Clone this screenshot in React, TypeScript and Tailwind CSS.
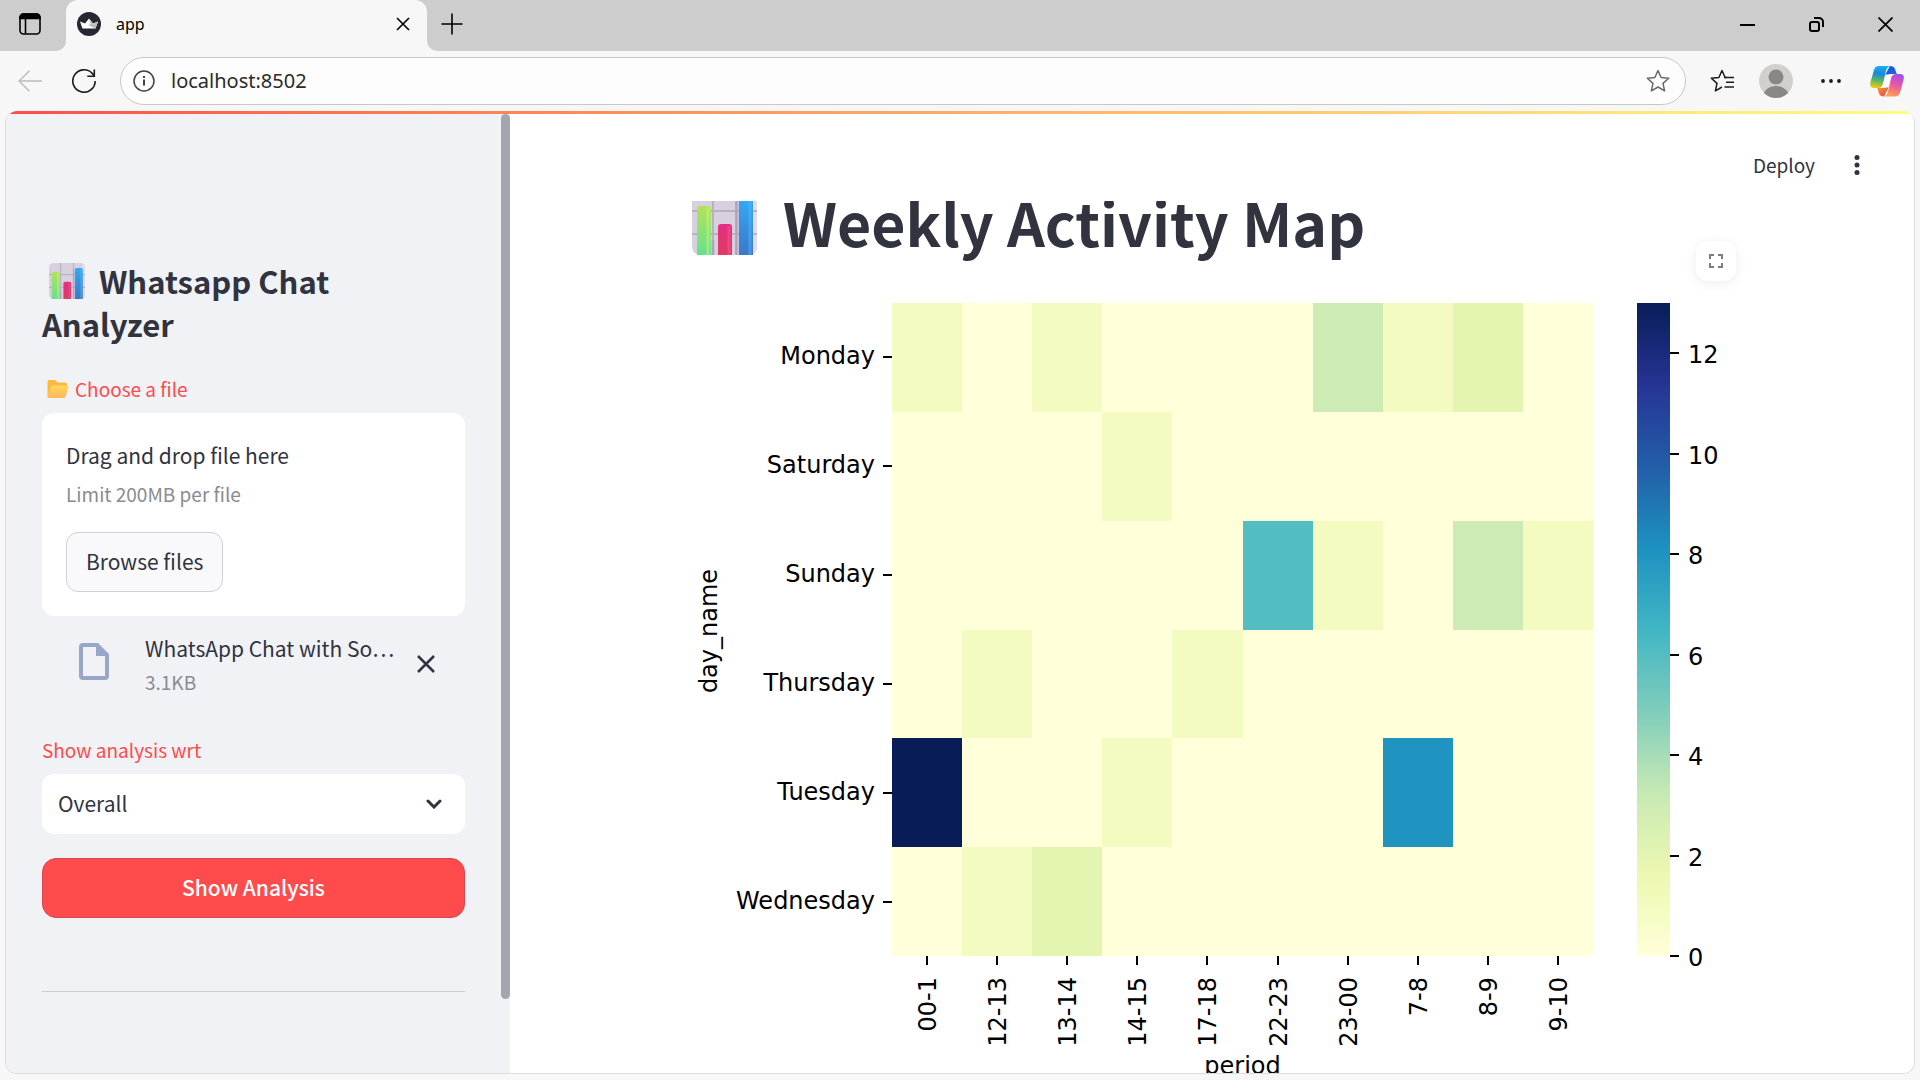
import React, { useState } from "react";

const STOPS = [
  [255, 255, 217],
  [237, 248, 177],
  [199, 233, 180],
  [127, 205, 187],
  [65, 182, 196],
  [29, 145, 192],
  [34, 94, 168],
  [37, 52, 148],
  [8, 29, 88],
];

const MAX = 13;

function colorFor(value: number) {
  const t = (value / MAX) * (STOPS.length - 1);
  const i = Math.min(Math.floor(t), STOPS.length - 2);
  const f = t - i;
  const c = STOPS[i].map((a, k) => Math.round(a + (STOPS[i + 1][k] - a) * f));
  return `rgb(${c.join(",")})`;
}

const PERIODS = ["00-1", "12-13", "13-14", "14-15", "17-18", "22-23", "23-00", "7-8", "8-9", "9-10"];

const DAYS: { name: string; values: number[] }[] = [
  { name: "Monday", values: [1, 0, 1, 0, 0, 0, 3, 1, 2, 0] },
  { name: "Saturday", values: [0, 0, 0, 1, 0, 0, 0, 0, 0, 0] },
  { name: "Sunday", values: [0, 0, 0, 0, 0, 6, 1, 0, 3, 1] },
  { name: "Thursday", values: [0, 1, 0, 0, 1, 0, 0, 0, 0, 0] },
  { name: "Tuesday", values: [13, 0, 0, 1, 0, 0, 0, 8, 0, 0] },
  { name: "Wednesday", values: [0, 1, 2, 0, 0, 0, 0, 0, 0, 0] },
];

function Heatmap() {
  const x0 = 208;
  const y0 = 13;
  const w = 701;
  const h = 653;
  const cw = w / PERIODS.length;
  const ch = h / DAYS.length;
  const bottom = y0 + h;
  return (
    <svg
      viewBox="0 0 1056 810"
      className="block w-full font-['DejaVu_Sans',sans-serif] text-[24px]"
      role="img"
      aria-label="Weekly activity heatmap"
    >
      <defs>
        <linearGradient id="ylgnbu" x1="0" y1="1" x2="0" y2="0">
          {STOPS.map((c, i) => (
            <stop key={i} offset={i / (STOPS.length - 1)} stopColor={`rgb(${c.join(",")})`} />
          ))}
        </linearGradient>
      </defs>
      <rect x={x0} y={y0} width={w} height={h} fill={colorFor(0)} />
      {DAYS.map((d, r) =>
        d.values.map((v, c) =>
          v > 0 ? (
            <rect
              key={`${r}-${c}`}
              x={Math.round(x0 + c * cw)}
              y={Math.round(y0 + r * ch)}
              width={Math.round(x0 + (c + 1) * cw) - Math.round(x0 + c * cw)}
              height={Math.round(y0 + (r + 1) * ch) - Math.round(y0 + r * ch)}
              fill={colorFor(v)}
            />
          ) : null
        )
      )}
      {DAYS.map((d, r) => {
        const y = Math.round(y0 + (r + 0.5) * ch);
        return (
          <g key={d.name}>
            <rect x={x0 - 9} y={y - 1} width={9} height={2} />
            <text x={x0 - 17} y={y + 7} textAnchor="end">
              {d.name}
            </text>
          </g>
        );
      })}
      {PERIODS.map((p, c) => {
        const x = Math.round(x0 + (c + 0.5) * cw);
        return (
          <g key={p}>
            <rect x={x - 1} y={bottom} width={2} height={9} />
            <text transform={`translate(${x + 9} ${bottom + 21}) rotate(-90)`} textAnchor="end">
              {p}
            </text>
          </g>
        );
      })}
      <text transform="translate(33 341) rotate(-90)" textAnchor="middle">
        day_name
      </text>
      <text x={x0 + w / 2} y={784} textAnchor="middle">
        period
      </text>
      <rect x={953} y={y0} width={33} height={h} fill="url(#ylgnbu)" />
      {[0, 2, 4, 6, 8, 10, 12].map((v) => {
        const y = Math.round(bottom - (v / MAX) * h);
        return (
          <g key={v}>
            <rect x={986} y={y - 1} width={9} height={2} />
            <text x={1004} y={y + 10}>
              {v}
            </text>
          </g>
        );
      })}
    </svg>
  );
}

function ChartEmoji({ id, className }: { id: string; className: string }) {
  return (
    <svg viewBox="0 0 65 65" className={className} aria-hidden="true">
      <defs>
        <linearGradient id={`${id}g`} x1="0" y1="0" x2="0" y2="1">
          <stop offset="0" stopColor="#b3e25a" />
          <stop offset="1" stopColor="#66e08f" />
        </linearGradient>
        <linearGradient id={`${id}r`} x1="0" y1="0" x2="0" y2="1">
          <stop offset="0" stopColor="#e62e86" />
          <stop offset="1" stopColor="#df3b62" />
        </linearGradient>
        <linearGradient id={`${id}b`} x1="0" y1="0" x2="0" y2="1">
          <stop offset="0" stopColor="#33aaf7" />
          <stop offset="1" stopColor="#3a78c9" />
        </linearGradient>
        <clipPath id={`${id}c`}>
          <rect width="65" height="65" rx="8" />
        </clipPath>
      </defs>
      <g clipPath={`url(#${id}c)`}>
        <rect width="65" height="65" fill="#d7d1df" />
        <rect x="60" width="5" height="65" fill="#e2dbea" />
        <path d="M0 21h65M0 44h65M21 0v65M44 0v65" stroke="#b9b1c1" strokeWidth="2" />
        <path d="M21 50v15M45 10v55" stroke="#a795bb" strokeWidth="3" opacity=".5" />
      </g>
      <path d="M5 65V19a3 3 0 0 1 3-3h8a3 3 0 0 1 3 3v46z" fill={`url(#${id}g)`} />
      <path d="M16 17v48" stroke="#c9f56e" strokeWidth="3" opacity=".5" />
      <path d="M26 65V37a3 3 0 0 1 3-3h8a3 3 0 0 1 3 3v28z" fill={`url(#${id}r)`} />
      <path d="M37 36v29" stroke="#f65a9a" strokeWidth="3" opacity=".5" />
      <path d="M47 65V12a3 3 0 0 1 3-3h8a3 3 0 0 1 3 3v53z" fill={`url(#${id}b)`} />
      <path d="M58 10v55" stroke="#55bdff" strokeWidth="3" opacity=".45" />
    </svg>
  );
}

function FolderEmoji() {
  return (
    <svg viewBox="0 0 22 20" className="h-5 w-[22px]" aria-hidden="true">
      <defs>
        <linearGradient id="folder" x1="0" y1="0" x2="0" y2="1">
          <stop offset="0" stopColor="#ffd95c" />
          <stop offset="1" stopColor="#ffb65e" />
        </linearGradient>
      </defs>
      <path d="M.5 18V2.500Q.5 1 2 1h5.500q1 0 1.600.8L10.500 3.500H18q2 0 2 2V10L4 18z" fill="#fdb93f" />
      <path d="M5.500 6.500h14.800q1.500 0 1.200 1.400L18.600 17.500q-.5 1.500-2 1.500H1.700q-1.200 0-1-.9L4 7.500q.4-1 1.500-1z" fill="url(#folder)" />
    </svg>
  );
}

function CopilotLogo() {
  return (
    <svg viewBox="0 0 34 31" className="h-[31px] w-[34px]" aria-hidden="true">
      <defs>
        <linearGradient id="cpA" x1="0.500" y1="0" x2="0.350" y2="1">
          <stop offset="0" stopColor="#1cb0f0" />
          <stop offset=".35" stopColor="#1b87dd" />
          <stop offset=".65" stopColor="#55b568" />
          <stop offset="1" stopColor="#f3c90c" />
        </linearGradient>
        <linearGradient id="cpB" x1="0.700" y1="0" x2="0.400" y2="1">
          <stop offset="0" stopColor="#a24df2" />
          <stop offset=".5" stopColor="#f0589c" />
          <stop offset="1" stopColor="#fda352" />
        </linearGradient>
        <linearGradient id="cpC" x1="0" y1="0" x2="1" y2="1">
          <stop offset="0" stopColor="#1a4fd0" />
          <stop offset="1" stopColor="#1f6ae6" />
        </linearGradient>
        <linearGradient id="cpD" x1="0" y1="0" x2="1" y2="1">
          <stop offset="0" stopColor="#fb9a3c" />
          <stop offset="1" stopColor="#e5403b" />
        </linearGradient>
      </defs>
      <path d="M15.500 6.500L12.500 18Q11.500 21 14 22l3.500 1.500L20.500 12Q21.500 8.500 24 8z" fill="#fdfdfd" />
      <path d="M20 0Q24 0 25 3l1.700 5H22q-3 0-6.800.8z" fill="url(#cpC)" />
      <path d="M14 30.500Q10 30.500 9 27.500L7.300 22H12q3 0 6.800-.8z" fill="url(#cpD)" />
      <path d="M9 0h12q-4 0-5.300 6L13 17.500Q12 22 8 22H4Q-1 22 .5 16L4 4Q5 0 9 0z" fill="url(#cpA)" />
      <path d="M25 30.500H13q4 0 5.300-6L21 12.500Q22 8 26 8h4q5 0 3.500 6L30 26.500Q29 30.500 25 30.500z" fill="url(#cpB)" />
    </svg>
  );
}

const STAR = "M12 1.500l3.100 7 7.600.8-5.700 5.100 1.600 7.500-6.600-3.900-6.600 3.900L7 14.400 1.300 9.300l7.600-.8z";

function TabStrip() {
  return (
    <div className="flex h-[51px] shrink-0 bg-[#f7f7f7] font-['Noto_Sans',sans-serif]">
      <div className="flex w-[66px] items-center rounded-br-[10px] bg-[#cdcdcd] pl-[19px] pb-1">
        <button aria-label="Tab actions" className="block">
          <svg viewBox="0 0 22 22" className="h-[22px] w-[22px]" fill="none" stroke="#000" strokeWidth="1.600">
            <rect x="1" y="1" width="20" height="20" rx="3.500" />
            <path d="M1 5.500V4.500A3.500 3.500 0 0 1 4.500 1h13A3.500 3.500 0 0 1 21 4.500V5.500z" fill="#000" />
            <path d="M6.500 6v15" />
          </svg>
        </button>
      </div>
      <div className="w-[361px] bg-[#cdcdcd]">
        <div className="flex h-full items-center rounded-t-xl bg-[#f7f7f7] pr-3 pb-[3px] pl-[11px]">
          <svg viewBox="0 0 24 24" className="h-6 w-6" aria-hidden="true">
            <circle cx="12" cy="12" r="12" fill="#262730" />
            <path d="M3 9.500l5 2L12 6.500l4 5 5-2L18.500 16.500h-13z" fill="#fff" />
            <path d="M12 6.500l4 5-2 1.500zM21 9.500l-2.500 7L11 13l5-1.500z" fill="#bdbdc2" />
          </svg>
          <span className="ml-[15px] flex-1 text-base text-black">app</span>
          <button aria-label="Close tab" className="flex h-6 w-6 items-center justify-center">
            <svg viewBox="0 0 14 14" className="h-3.5 w-3.5" stroke="#000" strokeWidth="1.600">
              <path d="M1 1l12 12M13 1L1 13" />
            </svg>
          </button>
        </div>
      </div>
      <div className="flex flex-1 items-center justify-between rounded-bl-[10px] bg-[#cdcdcd] pr-[27px] pb-[3px] pl-[14px]">
        <button aria-label="New tab">
          <svg viewBox="0 0 22 22" className="h-[22px] w-[22px]" stroke="#000" strokeWidth="1.600">
            <path d="M11 .5v21M.5 11h21" />
          </svg>
        </button>
        <div className="flex items-center gap-[54px]">
          <button aria-label="Minimize">
            <svg viewBox="0 0 15 15" className="h-[15px] w-[15px]" stroke="#000" strokeWidth="2">
              <path d="M0 8h15" />
            </svg>
          </button>
          <button aria-label="Restore">
            <svg viewBox="0 0 15 15" className="h-[15px] w-[15px]" fill="none" stroke="#000" strokeWidth="2">
              <rect x="1" y="5" width="9" height="9" rx="2" />
              <path d="M5 1h5a4 4 0 0 1 4 4v5" />
            </svg>
          </button>
          <button aria-label="Close window">
            <svg viewBox="0 0 15 15" className="h-[15px] w-[15px]" stroke="#000" strokeWidth="1.700">
              <path d="M.5.5l14 14M14.500.5l-14 14" />
            </svg>
          </button>
        </div>
      </div>
    </div>
  );
}

function Toolbar() {
  const [url, setUrl] = useState("localhost:8502");
  return (
    <div className="flex h-[60px] shrink-0 items-center bg-[#f7f7f7] pr-[16px] pl-[18px] font-['Noto_Sans',sans-serif]">
      <button aria-label="Back">
        <svg viewBox="0 0 24 22" className="h-[22px] w-6" fill="none" stroke="#bcbcbc" strokeWidth="1.500">
          <path d="M24 11H1M11.500.8L1 11l10.500 10.200" />
        </svg>
      </button>
      <button aria-label="Refresh" className="ml-[30px]">
        <svg viewBox="0 0 24 24" className="h-6 w-6" fill="none" stroke="#1b1b1b" strokeWidth="1.600">
          <path d="M23.200 12A11.200 11.200 0 1 1 20.200 4.400L22.300 6.800" />
          <path d="M22.300.5v6.700h-7" />
        </svg>
      </button>
      <div className="ml-6 flex h-12 flex-1 items-center rounded-full border border-[#c8c8c8] bg-[#fdfdfd] pr-[15px] pl-3">
        <svg viewBox="0 0 22 22" className="h-[22px] w-[22px]" fill="none" stroke="#404040" strokeWidth="1.500" aria-hidden="true">
          <circle cx="11" cy="11" r="10" />
          <path d="M11 9.500v6" strokeWidth="2" />
          <path d="M11 6v2" strokeWidth="2" />
        </svg>
        <input
          aria-label="Address"
          value={url}
          onChange={(e) => setUrl(e.target.value)}
          className="ml-4 min-w-0 flex-1 bg-transparent text-[20px] text-[#2b2b2b] outline-none"
        />
        <button aria-label="Add to favorites">
          <svg viewBox="0 0 24 24" className="h-6 w-6" fill="none" stroke="#6a6a6a" strokeWidth="1.500" strokeLinejoin="round">
            <path d={STAR} />
          </svg>
        </button>
      </div>
      <button aria-label="Favorites" className="ml-6">
        <svg viewBox="0 0 24 24" className="h-6 w-6" fill="none" stroke="#1b1b1b" strokeWidth="1.500" strokeLinejoin="round">
          <path d="M16.500 8.600L15.100 8.500 12 1.500l-3.100 7-7.600.8L7 14.400l-1.600 7.500 6.600-3.900" />
          <path d="M14 8.600h10M16 13.200h8M14.500 18h9.500" />
        </svg>
      </button>
      <button aria-label="Profile" className="ml-[25px]">
        <svg viewBox="0 0 34 34" className="h-[34px] w-[34px]">
          <clipPath id="avatar">
            <circle cx="17" cy="17" r="17" />
          </clipPath>
          <g clipPath="url(#avatar)">
            <rect width="34" height="34" fill="#d2d0ce" />
            <circle cx="17" cy="13" r="7.500" fill="#8a8683" />
            <ellipse cx="17" cy="33" rx="13" ry="11" fill="#8a8683" />
          </g>
        </svg>
      </button>
      <button aria-label="Settings and more" className="ml-7">
        <svg viewBox="0 0 20 4" className="h-1 w-5" fill="#1b1b1b">
          <circle cx="2" cy="2" r="1.900" />
          <circle cx="10" cy="2" r="1.900" />
          <circle cx="18" cy="2" r="1.900" />
        </svg>
      </button>
      <button aria-label="Copilot" className="ml-[29px]">
        <CopilotLogo />
      </button>
    </div>
  );
}

function Sidebar() {
  const [who, setWho] = useState("Overall");
  return (
    <aside className="relative w-[504px] shrink-0 overflow-hidden bg-[#f0f2f6] pt-[148px] pr-[45px] pl-9">
      <h1 className="text-[31px] leading-[43px] font-semibold">
        <ChartEmoji id="s" className="mr-3.5 ml-[7px] inline-block h-9 w-9 align-[-5px]" />
        Whatsapp Chat Analyzer
      </h1>
      <label htmlFor="browse" className="mt-[26px] mb-1.5 flex items-center gap-1.5 pl-[5px] text-[19px] leading-9 text-[#ff4b4b]">
        <FolderEmoji />
        Choose a file
      </label>
      <section className="rounded-xl bg-white p-6">
        <p className="text-[21px] leading-9">Drag and drop file here</p>
        <p className="mt-[3px] text-[19px] leading-9 text-[#8a8b93]">Limit 200MB per file</p>
        <button
          id="browse"
          className="mt-5 h-[60px] rounded-xl border border-[#d0d1d6] bg-[#f9f9fb] px-[19px] text-[21px]"
        >
          Browse files
        </button>
      </section>
      <div className="mt-3.5 flex items-center pr-[30px] pl-[37px]">
        <svg viewBox="0 0 30 37" className="mb-1 h-[37px] w-[30px] shrink-0" aria-hidden="true">
          <path
            d="M4 0h15l11 11v22a4 4 0 0 1-4 4H4a4 4 0 0 1-4-4V4a4 4 0 0 1 4-4zm0 4v29h22V13h-9V4z"
            fill="#98a7c9"
          />
        </svg>
        <div className="ml-9 min-w-0 flex-1">
          <p className="text-[21px] leading-9 whitespace-nowrap">WhatsApp Chat with So…</p>
          <p className="text-[19px] leading-[31px] text-[#8a8b93]">3.1KB</p>
        </div>
        <button aria-label="Remove file" className="shrink-0">
          <svg viewBox="0 0 18 18" className="h-[18px] w-[18px]" stroke="#31333f" strokeWidth="2.500">
            <path d="M1 1l16 16M17 1L1 17" />
          </svg>
        </button>
      </div>
      <label htmlFor="user" className="mt-[35px] mb-1.5 block text-[19px] leading-9 text-[#ff4b4b]">
        Show analysis wrt
      </label>
      <div className="relative">
        <select
          id="user"
          value={who}
          onChange={(e) => setWho(e.target.value)}
          className="block h-[60px] w-full appearance-none rounded-xl bg-white pr-14 pl-4 text-[21px] outline-none"
        >
          <option>Overall</option>
        </select>
        <svg
          viewBox="0 0 16 10"
          className="pointer-events-none absolute top-[25px] right-[23px] h-2.5 w-4"
          fill="none"
          stroke="#31333f"
          strokeWidth="3"
          strokeLinecap="round"
          aria-hidden="true"
        >
          <path d="M2 2l6 6 6-6" />
        </svg>
      </div>
      <button className="mt-6 block h-[60px] w-full rounded-[14px] border border-[#d9484f] bg-[#ff4b4b] text-[21px] font-medium text-white">
        Show Analysis
      </button>
      <hr className="mt-[73px] border-[#cccdd3]" />
      <div className="absolute top-[3px] right-0 h-[885px] w-[9px] rounded-full bg-[#a5a5af]" />
    </aside>
  );
}

function Main() {
  return (
    <main className="flex min-w-0 flex-1 flex-col bg-white">
      <header className="flex h-[90px] shrink-0 items-center justify-end gap-9 pt-[18px] pr-[51px]">
        <button className="text-[19px]">Deploy</button>
        <button aria-label="Main menu" className="w-[12px]">
          <svg viewBox="0 0 12 20" className="h-5 w-3" fill="#31333f">
            <circle cx="6" cy="2.500" r="2.500" />
            <circle cx="6" cy="10" r="2.500" />
            <circle cx="6" cy="17.500" r="2.500" />
          </svg>
        </button>
      </header>
      <div className="min-h-0 flex-1 overflow-hidden">
        <div className="mx-auto w-full max-w-[1056px]">
          <h1 className="-mt-[19px] flex items-center pl-2 text-[59px] leading-[80px] font-bold">
            <ChartEmoji id="m" className="mr-[26px] h-[65px] w-[65px]" />
            Weekly Activity Map
          </h1>
          <div className="relative mt-7">
            <Heatmap />
            <button
              aria-label="Fullscreen"
              className="absolute -top-[49px] right-1 flex h-10 w-10 items-center justify-center rounded-xl bg-white shadow-[0_2px_12px_rgba(0,0,0,0.08)]"
            >
              <svg viewBox="0 0 14 14" className="h-3.5 w-3.5" fill="none" stroke="#7c7d86" strokeWidth="2">
                <path d="M1 5V1h4M9 1h4v4M13 9v4H9M5 13H1V9" />
              </svg>
            </button>
          </div>
        </div>
      </div>
    </main>
  );
}

export default function App() {
  return (
    <div className="flex h-screen flex-col overflow-hidden bg-[#f7f7f7]">
      <TabStrip />
      <Toolbar />
      <div className="mr-[5px] mb-1.5 ml-[5px] flex min-h-0 flex-1 flex-col overflow-hidden rounded-xl border-x border-b border-[#dcdcdf] bg-white font-['Noto_Sans_CJK_SC',sans-serif] text-[#31333f]">
        <div className="relative flex min-h-0 flex-1">
          <Sidebar />
          <Main />
          <div className="absolute inset-x-0 top-0 h-[3px] bg-linear-to-r from-[#ff4b4b] to-[#fffd80]" />
        </div>
      </div>
    </div>
  );
}
